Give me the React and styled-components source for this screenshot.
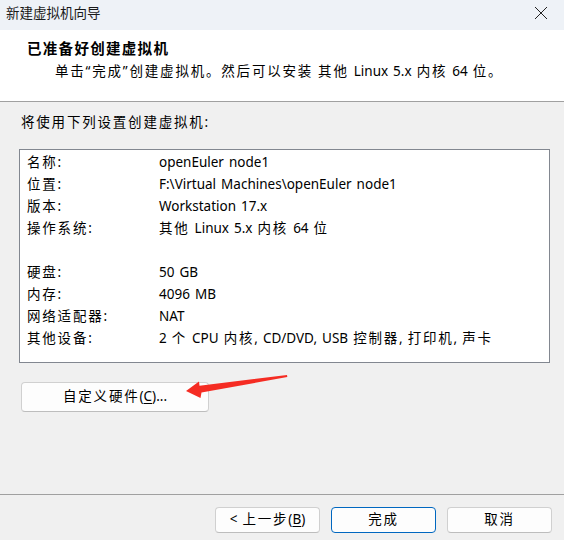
import React from "react";
import styled, { createGlobalStyle } from "styled-components";

const GlobalStyle = createGlobalStyle`
  html, body {
    margin: 0;
    padding: 0;
    background: #f0f0f0;
  }
  * {
    box-sizing: border-box;
  }
`;

const FONT = `"Noto Sans", "Noto Sans CJK SC", sans-serif`;

const rows = [
  ["名称:", "openEuler node1"],
  ["位置:", "F:\\Virtual Machines\\openEuler node1"],
  ["版本:", "Workstation 17.x"],
  ["操作系统:", "其他 Linux 5.x 内核 64 位"],
  ["", ""],
  ["硬盘:", "50 GB"],
  ["内存:", "4096 MB"],
  ["网络适配器:", "NAT"],
  ["其他设备:", "2 个 CPU 内核, CD/DVD, USB 控制器, 打印机, 声卡"],
];

// the dialog font spaces Chinese glyphs wider than the latin ones
const CJK = /([\u3000-\u303f\u4e00-\u9fff\uff00-\uffef“”]+)/;

function Txt({ children }) {
  return String(children)
    .split(CJK)
    .map((part, i) => (i % 2 ? <Han key={i}>{part}</Han> : part));
}

export default function App() {
  return (
    <>
      <GlobalStyle />
      <Window>
        <TitleBar>
          <TitleText>新建虚拟机向导</TitleText>
          <CloseIcon width="14" height="14" viewBox="0 0 14 14">
            <path d="M1 1 L13 13 M13 1 L1 13" stroke="#222" strokeWidth="1" />
          </CloseIcon>
        </TitleBar>

        <Header>
          <HeaderTitle>已准备好创建虚拟机</HeaderTitle>
          <HeaderSub>
            <Txt>单击“完成”创建虚拟机。然后可以安装 其他 Linux 5.x 内核 64 位。</Txt>
          </HeaderSub>
        </Header>

        <Content>
          <Intro>
            <Txt>将使用下列设置创建虚拟机:</Txt>
          </Intro>
          <SummaryBox>
            {rows.map(([label, value], i) => (
              <React.Fragment key={i}>
                <Label>
                  <Txt>{label}</Txt>
                </Label>
                <Value>
                  <Txt>{value}</Txt>
                </Value>
              </React.Fragment>
            ))}
          </SummaryBox>
          <Button $wide>
            <Han>自定义硬件</Han>(<u>C</u>)...
          </Button>
        </Content>

        <Footer>
          <Button>
            &lt; <Han>上一步</Han>(<u>B</u>)
          </Button>
          <Button $primary>
            <Han>完成</Han>
          </Button>
          <Button>
            <Han>取消</Han>
          </Button>
        </Footer>

        <Arrow width="564" height="540" viewBox="0 0 564 540">
          <polygon
            points="186,391 199,381.5 199.5,385.8 287,375 287.3,377 201.5,392.5 200.5,398"
            fill="#f52c23"
          />
        </Arrow>
      </Window>
    </>
  );
}

const Window = styled.div`
  position: relative;
  width: 564px;
  height: 540px;
  display: flex;
  flex-direction: column;
  background: #f0f0f0;
  font-family: ${FONT};
  font-size: 13.5px;
  word-spacing: 1.5px;
  color: #000;
  overflow: hidden;
`;

const Han = styled.span`
  letter-spacing: 1.8px;
`;

const TitleBar = styled.div`
  height: 30px;
  flex-shrink: 0;
  display: flex;
  align-items: flex-start;
  justify-content: space-between;
  padding: 2px 16px 0 6px;
  background: #eef2f7;
  word-spacing: 0;
`;

const TitleText = styled.span`
  line-height: 22px;
  font-size: 13.5px;
  color: #1a1a1a;
`;

const CloseIcon = styled.svg`
  margin-top: 4px;
`;

const Header = styled.div`
  height: 72px;
  flex-shrink: 0;
  background: #fff;
  border-bottom: 1px solid #a0a0a0;
  padding-top: 8px;
`;

const HeaderTitle = styled.div`
  padding-left: 27px;
  font-weight: 700;
  font-size: 14.5px;
  line-height: 20px;
  letter-spacing: 1.3px;
`;

const HeaderSub = styled.div`
  margin-top: 3px;
  padding-left: 55px;
  line-height: 20px;
`;

const Content = styled.div`
  flex: 1;
  display: flex;
  flex-direction: column;
  align-items: flex-start;
  padding: 10px 15px 0 19px;
`;

const Intro = styled.div`
  line-height: 20px;
  padding-left: 2px;
`;

const SummaryBox = styled.div`
  margin-top: 17px;
  width: 531px;
  display: grid;
  grid-template-columns: 132px 1fr;
  grid-auto-rows: 22px;
  align-items: center;
  padding: 1px 0 13px 7px;
  background: #fff;
  border: 1px solid #828790;
`;

const Label = styled.div`
  line-height: 22px;
  white-space: nowrap;
`;

const Value = styled.div`
  line-height: 22px;
  white-space: nowrap;
`;

const Button = styled.button`
  font-family: ${FONT};
  font-size: 13.5px;
  word-spacing: 1.5px;
  color: #000;
  width: ${(p) => (p.$wide ? "188px" : "105px")};
  height: ${(p) => (p.$wide ? "30px" : "26px")};
  margin: ${(p) => (p.$wide ? "19px 0 0 2px" : "0")};
  padding: 0;
  display: flex;
  align-items: center;
  justify-content: center;
  white-space: pre;
  background: #fdfdfd;
  border: 1px solid ${(p) => (p.$primary ? "#0067c0" : "#d0d0d0")};
  border-bottom-color: ${(p) => (p.$primary ? "#0067c0" : "#bdbdbd")};
  border-radius: 4px;
  line-height: 1;

  u {
    text-underline-offset: 2px;
  }
`;

const Footer = styled.div`
  flex-shrink: 0;
  display: flex;
  justify-content: flex-end;
  gap: 11px;
  border-top: 1px solid #a0a0a0;
  padding: 12px 12px 7px 0;
  height: 46px;
`;

const Arrow = styled.svg`
  position: absolute;
  left: 0;
  top: 0;
  pointer-events: none;
`;
